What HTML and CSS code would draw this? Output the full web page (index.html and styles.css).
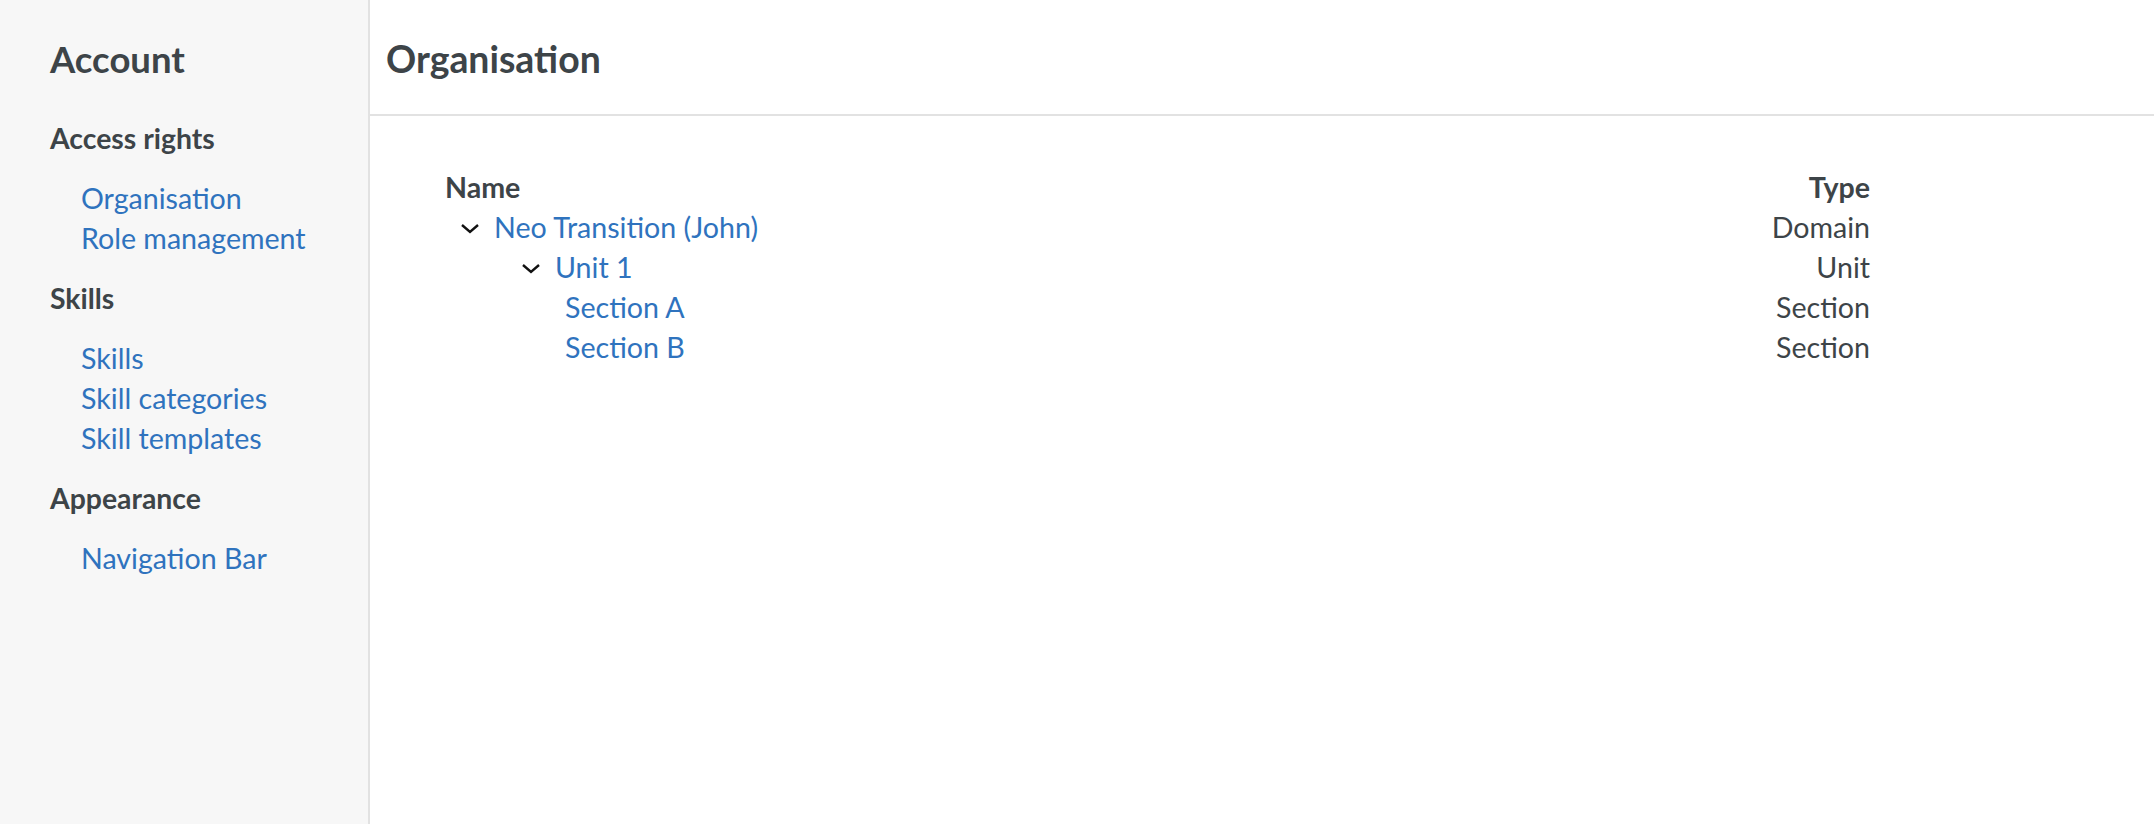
FILE: index.html
```html
<!DOCTYPE html>
<html>
<head lang="en">
  <meta charset="UTF-8">
  <title>Organisation</title>
  <link rel="stylesheet" href="styles.css">
</head>
<body>
  <div class="layout">
    <div class="sidebar">
      <h1 class="sidebar-title">Account</h1>
      <div class="group">
        <h2>Access rights</h2>
        <ul>
          <li><a href="#">Organisation</a></li>
          <li><a href="#">Role management</a></li>
        </ul>
      </div>
      <div class="group">
        <h2>Skills</h2>
        <ul>
          <li><a href="#">Skills</a></li>
          <li><a href="#">Skill categories</a></li>
          <li><a href="#">Skill templates</a></li>
        </ul>
      </div>
      <div class="group">
        <h2>Appearance</h2>
        <ul>
          <li><a href="#">Navigation Bar</a></li>
        </ul>
      </div>
    </div>
    <div class="main">
      <div class="header">
        <h1>Organisation</h1>
      </div>
      <table class="tree">
        <thead>
          <tr>
            <th class="name">Name</th>
            <th class="type">Type</th>
          </tr>
        </thead>
        <tbody>
          <tr>
            <td class="name level-0">
              <span class="toggle"><svg width="20" height="11" viewBox="0 0 20 11"><path d="M2 2 L10 9 L18 2"/></svg></span>
              <a href="#">Neo Transition (John)</a>
            </td>
            <td class="type">Domain</td>
          </tr>
          <tr>
            <td class="name level-1">
              <span class="toggle"><svg width="20" height="11" viewBox="0 0 20 11"><path d="M2 2 L10 9 L18 2"/></svg></span>
              <a href="#">Unit 1</a>
            </td>
            <td class="type">Unit</td>
          </tr>
          <tr>
            <td class="name level-2"><a href="#">Section A</a></td>
            <td class="type">Section</td>
          </tr>
          <tr>
            <td class="name level-2"><a href="#">Section B</a></td>
            <td class="type">Section</td>
          </tr>
        </tbody>
      </table>
    </div>
  </div>
</body>
</html>
```

FILE: styles.css
```css
* {
  margin: 0;
  padding: 0;
  box-sizing: border-box;
}
body {
  font-family: Lato, "Noto Sans", sans-serif;
  font-size: 28.6px;
  line-height: 40px;
  color: #3d4448;
  background: #fff;
}
ul {
  list-style: none;
}
a {
  color: #2f73be;
  text-decoration: none;
}
.layout {
  display: flex;
  min-height: 100vh;
}

/* sidebar */
.sidebar {
  width: 370px;
  flex-shrink: 0;
  background: #f7f7f7;
  border-right: 2px solid #e2e2e2;
  padding: 35px 0 0 50px;
}
.sidebar-title {
  font-size: 36.5px;
  line-height: 48px;
  font-weight: 700;
  margin-bottom: 35px;
}
.group {
  margin-bottom: 20px;
}
.group h2 {
  font-size: 28.4px;
  font-weight: 700;
  margin-bottom: 20px;
}
.group li {
  padding-left: 31px;
}

/* main */
.main {
  flex: 1;
}
.header {
  padding: 35px 16px 31px;
  border-bottom: 2px solid #e2e2e2;
}
.header h1 {
  font-size: 37.4px;
  line-height: 48px;
  font-weight: 700;
}
.tree {
  width: 1425px;
  margin: 51px 0 0 75px;
  border-collapse: collapse;
}
.tree th,
.tree td {
  padding: 0;
  height: 40px;
}
.tree th {
  font-weight: 700;
}
.tree .name {
  text-align: left;
}
.tree .type {
  text-align: right;
}
.tree td.name {
  display: flex;
  align-items: center;
}
.toggle {
  display: inline-flex;
  margin: 3px 14px 0 0;
}
.toggle path {
  fill: none;
  stroke: #111;
  stroke-width: 2.4;
}
.level-0 {
  padding-left: 15px !important;
}
.level-1 {
  padding-left: 76px !important;
}
.level-2 {
  padding-left: 120px !important;
}
```
